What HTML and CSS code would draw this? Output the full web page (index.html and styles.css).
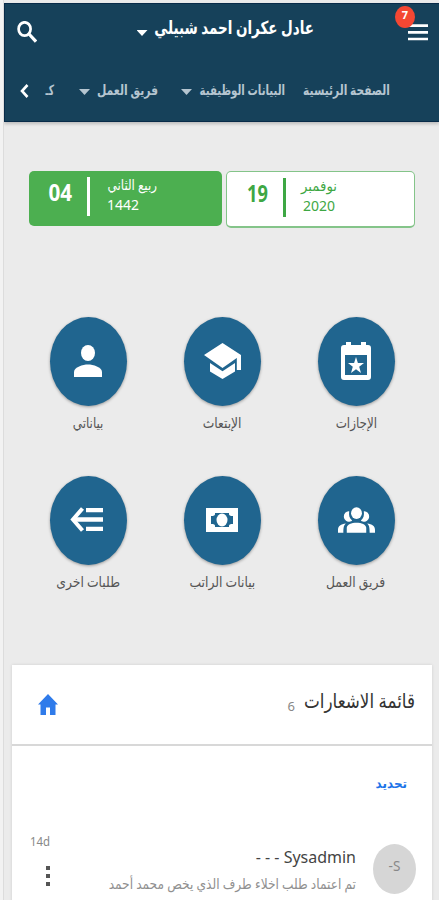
FILE: index.html
```html
<!DOCTYPE html>
<html lang="ar" dir="rtl">
<head>
    <meta charset="UTF-8">
    <meta name="viewport" content="width=device-width, initial-scale=1.0">
    <title>الصفحة الرئيسية</title>
    <link rel="stylesheet" href="styles.css">
</head>
<body>
    <div class="app">
        <header class="header">
            <div class="topbar">
                <button class="menu">
                    <svg width="20" height="17" viewBox="0 0 20 17"><path d="M0 1.7h20M0 8.4h20M0 15h20" stroke="#fff" stroke-width="2.7"/></svg>
                    <span class="badge">7</span>
                </button>
                <div class="user"><span class="text user-name">عادل عكران احمد شبيلي</span><i class="caret"></i></div>
                <svg class="search" width="20" height="22" viewBox="0 0 20 22" fill="none" stroke="#fff"><ellipse cx="7.6" cy="8" rx="6" ry="6.7" stroke-width="2.7"/><path d="M12 13l7 7.6" stroke-width="3.2"/></svg>
            </div>
            <nav class="nav">
                <a class="nav-item nav-main"><span class="text">الصفحة الرئيسية</span></a>
                <a class="nav-item nav-data"><span class="text">البيانات الوظيفية</span></a><i class="caret"></i>
                <a class="nav-item nav-team"><span class="text">فريق العمل</span></a><i class="caret"></i>
                <a class="nav-item nav-cut"><span class="text">كـ</span></a>
                <svg class="next" width="9" height="14" viewBox="0 0 9 14"><path d="M7.5 1L2 7l5.5 6" fill="none" stroke="#fff" stroke-width="2.6"/></svg>
            </nav>
        </header>

        <section class="dates">
            <div class="date gregorian">
                <div class="month"><span class="text">نوفمبر</span><span class="text year">2020</span></div>
                <div class="day"><span class="text">19</span></div>
            </div>
            <div class="date hijri">
                <div class="month"><span class="text">ربيع الثاني</span><span class="text year">1442</span></div>
                <div class="day"><span class="text">04</span></div>
            </div>
        </section>

        <section class="tiles">
            <a class="tile">
                <span class="circle"><svg width="30" height="38" viewBox="0 0 30 38"><path fill="#fff" fill-rule="evenodd" d="M5 0h5v3h10V0h5v3h2q3 0 3 3v29q0 3-3 3H3q-3 0-3-3V6q0-3 3-3h2zM4 13v20h22V13z"/><path fill="#fff" d="M15 15l1.9 6H23l-4.8 3.7L20 31l-5-3.7L10 31l1.800-6.300L7 21h6.100z"/></svg></span>
                <span class="text label-leave">الإجازات</span>
            </a>
            <a class="tile">
                <span class="circle"><svg width="37" height="36" viewBox="0 0 37 36"><path fill="#fff" d="M18.500 0L0 12l18.500 13 14.300-10v12H37V12zM6 20v8.500L18.500 36 31 28.500V20l-12.500 8.300z"/></svg></span>
                <span class="text label-study">الإبتعاث</span>
            </a>
            <a class="tile">
                <span class="circle"><svg width="28" height="32" viewBox="0 0 28 32"><ellipse cx="14" cy="8" rx="7" ry="8" fill="#fff"/><path fill="#fff" d="M0 32v-5c0-5 9-7.500 14-7.500S28 22 28 27v5z"/></svg></span>
                <span class="text label-mine">بياناتي</span>
            </a>
            <a class="tile">
                <span class="circle"><svg width="37" height="26" viewBox="0 0 38 26" fill="#fff"><ellipse cx="19" cy="6" rx="5.600" ry="6"/><path d="M9 26v-5c0-7 20-7 20 0v5zM0 26v-3c0-4 3-6 8-6.500-2 2-2.500 4-2.500 9.500zM38 26v-3c0-4-3-6-8-6.500 2 2 2.500 4 2.500 9.500zM11.500 4a5 5.400 0 1 0 1 10.500c1.500-.3 2-1 2-1-3-2.500-3.500-5.500-3-9.500zM26.500 4a5 5.400 0 1 1-1 10.500c-1.500-.3-2-1-2-1 3-2.500 3.500-5.500 3-9.500z"/></svg></span>
                <span class="text label-team">فريق العمل</span>
            </a>
            <a class="tile">
                <span class="circle"><svg width="32" height="24" viewBox="0 0 32 24"><path fill="#fff" fill-rule="evenodd" d="M0 0h32v24H0zM9 5v1c0 1.500-1 2-4 2v8c3 0 4 .5 4 2v1h14v-1c0-1.500 1-2 4-2V8c-3 0-4-.5-4-2V5z"/><ellipse cx="16" cy="12" rx="5.500" ry="6.500" fill="#fff"/></svg></span>
                <span class="text label-salary">بيانات الراتب</span>
            </a>
            <a class="tile">
                <span class="circle"><svg class="requests" width="33" height="25" viewBox="0 0 33 25" fill="none" stroke="#fff" stroke-width="4.300"><path d="M16 3.200h17M4 12.500h29M16 21.800h17"/><path d="M12.500 1.500L3 12.500l9.500 11" stroke-width="4"/></svg></span>
                <span class="text label-other">طلبات اخرى</span>
            </a>
        </section>

        <section class="panel">
            <div class="panel-head">
                <h2><span class="text">قائمة الاشعارات</span></h2>
                <span class="count">6</span>
                <svg class="home" width="20" height="21" viewBox="0 0 20 21"><path fill="#2f7bea" d="M10 0l10 10.500h-2.500V21H12v-7.500H8V21H2.500V10.500H0z"/></svg>
            </div>
            <div class="select"><span class="text">تحديد</span></div>
            <div class="note">
                <div class="avatar"><span class="text" dir="ltr">-S</span></div>
                <div class="note-body">
                    <span class="text sender">Sysadmin - - -</span>
                    <span class="text message">تم اعتماد طلب اخلاء طرف الذي يخص محمد أحمد</span>
                </div>
                <div class="note-side">
                    <span class="text time">14d</span>
                    <svg width="4" height="20" viewBox="0 0 4 20" fill="#555"><path d="M0 0h4v4H0zM0 8h4v4H0zM0 16h4v4H0z"/></svg>
                </div>
            </div>
        </section>
    </div>
</body>
</html>
```
FILE: styles.css
```css
* {
    box-sizing: border-box;
}
body {
    margin: 0;
    background-color: #f2f2f2;
    font-family: "Noto Sans", "DejaVu Sans", sans-serif;
}
.app {
    height: 900px;
    margin-left: 3px;
    padding-top: 3px;
    border-left: 1px solid #dcdcdc;
    background-color: #ebebeb;
    overflow: hidden;
}
/* labels are drawn in a condensed width */
.text {
    display: block;
    white-space: nowrap;
    transform: scaleX(0.8);
    transform-origin: right center;
}
.header {
    height: 119px;
    background-color: #16415a;
    border-top: 1px solid #082b49;
    border-bottom: 1px solid #082b49;
    border-left: 1px solid #082b49;
    box-shadow: 0 2px 3px rgba(0, 0, 0, 0.2);
    color: #fff;
}
.topbar {
    display: flex;
    justify-content: space-between;
    height: 60px;
    padding: 0 11px 0 12px;
}
.menu {
    position: relative;
    width: 20px;
    height: 17px;
    margin-top: 20px;
    padding: 0;
    border: none;
    background: none;
}
.menu svg {
    display: block;
}
.badge {
    position: absolute;
    left: -13px;
    top: -18px;
    width: 20px;
    height: 22px;
    border-radius: 50%;
    background-color: #f44733;
    color: #fff;
    font: bold 11px/18px "Noto Sans", sans-serif;
    text-align: center;
}
.user {
    display: flex;
    margin-top: 8px;
    margin-left: 5px;
}
.user-name {
    width: 159px;
    font-size: 18px;
    font-weight: bold;
    line-height: 30px;
    transform: scaleX(0.75);
}
.caret {
    width: 11px;
    height: 6px;
    background-color: #fff;
    clip-path: polygon(0 0, 100% 0, 50% 100%);
}
.user .caret {
    margin: 18px 7px 0 0;
}
.search {
    margin-top: 17px;
}
.nav {
    display: flex;
    padding-right: 49px;
    line-height: 30px;
    margin-top: 11px;
    color: #b5c5d0;
    font-size: 14px;
    font-weight: bold;
}
.nav .caret {
    margin: 14px 7px 0 23px;
    background-color: #b5c5d0;
}
.nav-main {
    width: 87px;
    margin-left: 18px;
}
.nav-main .text {
    transform: scaleX(0.76);
}
.nav-data {
    width: 86px;
}
.nav-data .text {
    transform: scaleX(0.73);
}
.nav-team {
    width: 61px;
}
.nav-team .text {
    transform: scaleX(0.77);
}
.nav-cut {
    width: 11px;
    padding-right: 2px;
}
.nav-cut .text {
    transform: scaleX(0.65);
}
.next {
    margin: 9px 16px 0 0;
}
.dates {
    display: flex;
    gap: 4px;
    padding: 49px 24px 0 25px;
}
.date {
    display: flex;
    border-radius: 5px;
    font-size: 14px;
}
.gregorian {
    width: 189px;
    height: 57px;
    padding-right: 77px;
    background-color: #fff;
    border: 1px solid #84c489;
    border-bottom-width: 2px;
    color: #3ea744;
}
.hijri {
    width: 193px;
    height: 55px;
    padding-right: 65px;
    background-color: #4caf50;
    color: #fff;
}
.month {
    padding-top: 4px;
    line-height: 20px;
}
.gregorian .month {
    width: 51px;
}
.hijri .month {
    width: 67px;
}
.gregorian .month .text {
    transform: scaleX(0.95);
}
.gregorian .month .year {
    padding-right: 2px;
    transform: none;
}
.hijri .month .text {
    transform: scaleX(0.85);
}
.hijri .month .year {
    padding-right: 18px;
    transform: none;
}
.day {
    width: 41px;
    height: 39px;
    margin-top: 6px;
    border-right: 3px solid;
    padding-right: 15px;
    font-size: 24px;
    font-weight: bold;
    line-height: 30px;
}
.gregorian .day .text {
    transform: scaleX(0.76);
}
.hijri .day .text {
    transform: scaleX(0.86);
}
.tiles {
    display: grid;
    grid-template-columns: repeat(3, 134px);
    grid-auto-rows: 159px;
    justify-content: center;
    margin-top: 89px;
    padding-left: 1px;
}
.tile {
    display: flex;
    flex-direction: column;
    align-items: center;
    color: #555;
    font-size: 14px;
    line-height: 28px;
}
.tile .text {
    transform: scaleX(0.88);
    transform-origin: center;
    margin-top: 3px;
}
.tile .label-leave,
.tile .label-mine {
    transform: scaleX(0.85);
}
.circle {
    display: flex;
    justify-content: center;
    align-items: center;
    width: 77px;
    height: 89px;
    padding-bottom: 2px;
    border-radius: 50%;
    background-color: #20658f;
    box-shadow: 0 1px 3px rgba(0, 0, 0, 0.35);
}
.requests {
    margin-right: 3px;
}
.panel {
    width: 420px;
    height: 240px;
    margin: 30px 7px 0 0;
    background-color: #fff;
    box-shadow: 0 0 3px rgba(0, 0, 0, 0.12);
}
.panel-head {
    display: flex;
    height: 81px;
    padding: 0 17px 0 26px;
    border-bottom: 2px solid #d8d8d8;
}
h2 {
    width: 111px;
    margin: 20px 0 0;
    color: #333;
    font-size: 20px;
    font-weight: normal;
    line-height: 32px;
}
h2 .text {
    transform: scaleX(0.84);
}
.count {
    margin: 31px 9px 0 0;
    color: #888;
    font-size: 13px;
    line-height: 20px;
}
.home {
    margin: 29px auto 0 0;
}
.select {
    height: 78px;
    padding: 24px 25px 0 0;
    color: #1c73e8;
    font-size: 13px;
    font-weight: bold;
    line-height: 26px;
}
.select .text {
    transform: scaleX(0.92);
}
.note {
    display: flex;
    padding: 0 16px 0 16px;
}
.avatar {
    width: 43px;
    height: 50px;
    margin-top: 20px;
    border-radius: 50%;
    background-color: #d6d6d6;
    color: #888;
    font-size: 15px;
    line-height: 43px;
    text-align: center;
}
.avatar .text {
    transform: scaleX(0.9);
    transform-origin: center;
}
.note-body {
    width: 250px;
    margin: 19px 17px 0 0;
}
.sender {
    color: #444;
    font-size: 17px;
    line-height: 28px;
    transform: scaleX(0.94);
}
.message {
    color: #909090;
    font-size: 14px;
    line-height: 26px;
    transform: scaleX(0.87);
}
.note-side {
    width: 22px;
    margin: 9px auto 0 0;
    color: #888;
}
.time {
    font-size: 12px;
    line-height: 18px;
    transform: scaleX(0.95);
}
.note-side svg {
    display: block;
    margin: 15px 0 0;
}
```
